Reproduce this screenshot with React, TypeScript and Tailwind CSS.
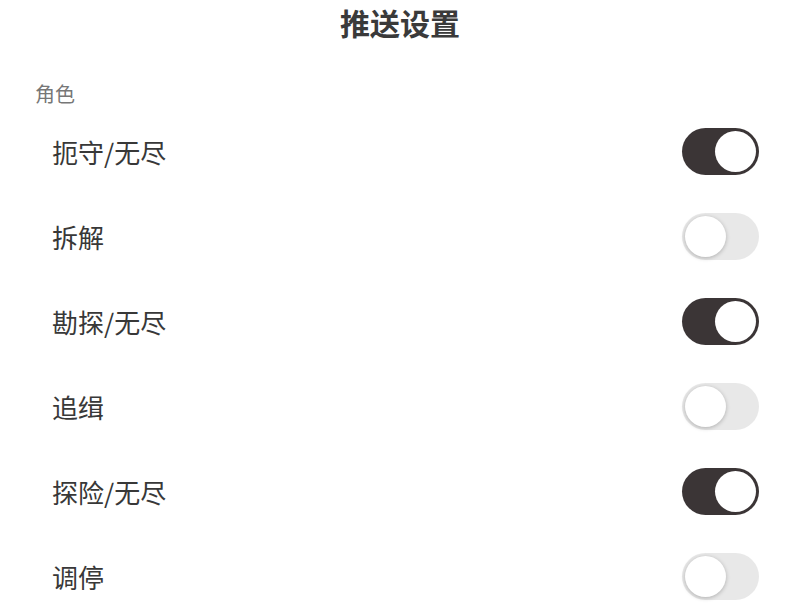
import { useState } from 'react';

const rows = [
    { name: '扼守/无尽', on: true },
    { name: '拆解', on: false },
    { name: '勘探/无尽', on: true },
    { name: '追缉', on: false },
    { name: '探险/无尽', on: true },
    { name: '调停', on: false },
];

const Toggle = ({ on, onClick }: { on: boolean; onClick: () => void }) => (
    <button
        onClick={onClick}
        className={`flex h-[47px] w-[77px] items-center rounded-full p-[3px] ${
            on ? 'justify-end bg-[#3b3536]' : 'justify-start bg-[#e8e8e8]'
        }`}
    >
        <span
            className={`block h-[41px] w-[41px] rounded-full bg-white ${
                on ? '' : 'shadow-[0_1px_4px_rgba(0,0,0,0.25)]'
            }`}
        />
    </button>
);

const App = () => {
    const [state, setState] = useState(rows.map((r) => r.on));

    return (
        <div className="h-[613px] w-[800px] bg-white text-[#333] font-['Noto_Sans_CJK_SC',sans-serif]">
            <div className="flex h-[44px] items-center justify-center text-[30px] font-bold text-[#3a3a3a]">
                推送设置
            </div>
            <div className="h-[65px] pt-[38px] pl-[35px] text-[20px] leading-6 text-[#777]">角色</div>
            {rows.map((r, i) => (
                <div key={r.name} className="flex h-[85px] items-center justify-between pl-[52px] pr-[41px]">
                    <span className="text-[26px] text-[#383838]">{r.name}</span>
                    <Toggle
                        on={state[i]}
                        onClick={() => setState(state.map((v, j) => (j === i ? !v : v)))}
                    />
                </div>
            ))}
        </div>
    );
};

export default App;
